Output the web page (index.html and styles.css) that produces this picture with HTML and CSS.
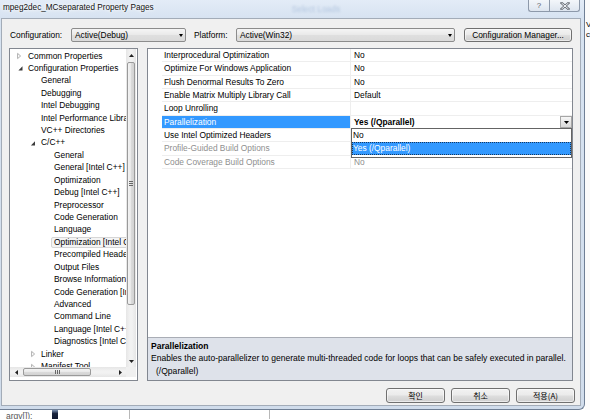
FILE: index.html
```html
<!DOCTYPE html>
<html>
<head>
<meta charset="utf-8">
<title>Property Pages</title>
<link rel="stylesheet" href="styles.css">
</head>
<body>
<div class="desktop">
  <div class="toprow">
    <div class="window">
      <div class="titlebar">
        <span class="title">mpeg2dec_MCseparated Property Pages</span>
        <span class="ghost">Select Loads</span>
        <div class="caption-btns">
          <span class="cap help">?</span>
          <span class="cap close"><svg width="10" height="8" viewBox="0 0 10 8"><path d="M1.5 1 L8.5 7 M8.5 1 L1.5 7" stroke="#6a6f78" stroke-width="2.4" stroke-linecap="square"/><path d="M1.5 1 L8.5 7 M8.5 1 L1.5 7" stroke="#f4f6f9" stroke-width="1"/></svg></span>
        </div>
      </div>
      <div class="client">
        <div class="configrow">
          <span class="lbl">Configuration:</span>
          <div class="combo c1"><span>Active(Debug)</span><i class="arr"></i></div>
          <span class="lbl plat">Platform:</span>
          <div class="combo c2"><span>Active(Win32)</span><i class="arr"></i></div>
          <div class="btn cfgmgr">Configuration Manager...</div>
        </div>
        <div class="main">
          <div class="tree">
            <div class="items">
              <div class="ti l0"><span class="tw"><svg width="13" height="12" viewBox="0 0 13 12"><path d="M2.6 3.4 L2.6 8.6 L5.6 6 Z" fill="none" stroke="#9a9a9a" stroke-width="0.8"/></svg></span><span class="tx">Common Properties</span></div>
              <div class="ti l0"><span class="tw"><svg width="13" height="12" viewBox="0 0 13 12"><path d="M7.5 4.2 L7.5 8.5 L3.4 8.5 Z" fill="#3a3a3a"/></svg></span><span class="tx">Configuration Properties</span></div>
              <div class="ti l1"><span class="tw"></span><span class="tx">General</span></div>
              <div class="ti l1"><span class="tw"></span><span class="tx">Debugging</span></div>
              <div class="ti l1"><span class="tw"></span><span class="tx">Intel Debugging</span></div>
              <div class="ti l1"><span class="tw"></span><span class="tx">Intel Performance Libraries</span></div>
              <div class="ti l1"><span class="tw"></span><span class="tx">VC++ Directories</span></div>
              <div class="ti l1"><span class="tw"><svg width="13" height="12" viewBox="0 0 13 12"><path d="M7 4.2 L7 8.5 L2.9 8.5 Z" fill="#3a3a3a"/></svg></span><span class="tx">C/C++</span></div>
              <div class="ti l2"><span class="tw"></span><span class="tx">General</span></div>
              <div class="ti l2"><span class="tw"></span><span class="tx">General [Intel C++]</span></div>
              <div class="ti l2"><span class="tw"></span><span class="tx">Optimization</span></div>
              <div class="ti l2"><span class="tw"></span><span class="tx">Debug [Intel C++]</span></div>
              <div class="ti l2"><span class="tw"></span><span class="tx">Preprocessor</span></div>
              <div class="ti l2"><span class="tw"></span><span class="tx">Code Generation</span></div>
              <div class="ti l2"><span class="tw"></span><span class="tx">Language</span></div>
              <div class="ti l2"><span class="tw"></span><span class="tx sel">Optimization [Intel C++]</span></div>
              <div class="ti l2"><span class="tw"></span><span class="tx">Precompiled Headers</span></div>
              <div class="ti l2"><span class="tw"></span><span class="tx">Output Files</span></div>
              <div class="ti l2"><span class="tw"></span><span class="tx">Browse Information</span></div>
              <div class="ti l2"><span class="tw"></span><span class="tx">Code Generation [Intel C++]</span></div>
              <div class="ti l2"><span class="tw"></span><span class="tx">Advanced</span></div>
              <div class="ti l2"><span class="tw"></span><span class="tx">Command Line</span></div>
              <div class="ti l2"><span class="tw"></span><span class="tx">Language [Intel C++]</span></div>
              <div class="ti l2"><span class="tw"></span><span class="tx">Diagnostics [Intel C++]</span></div>
              <div class="ti l1"><span class="tw"><svg width="13" height="12" viewBox="0 0 13 12"><path d="M3.6 3.4 L3.6 8.6 L6.6 6 Z" fill="none" stroke="#9a9a9a" stroke-width="0.8"/></svg></span><span class="tx">Linker</span></div>
              <div class="ti l1"><span class="tw"><svg width="13" height="12" viewBox="0 0 13 12"><path d="M3.6 3.4 L3.6 8.6 L6.6 6 Z" fill="none" stroke="#9a9a9a" stroke-width="0.8"/></svg></span><span class="tx">Manifest Tool</span></div>
            </div>
            <div class="vs">
              <div class="sarrow"><svg width="5" height="3" viewBox="0 0 5 3"><path d="M0 3 L2.5 0 L5 3 Z" fill="#222"/></svg></div>
              <div class="vthumb"><span class="vgrip"></span></div>
              <div class="sfill"></div>
              <div class="sarrow"><svg width="5" height="3" viewBox="0 0 5 3"><path d="M0 0 L2.5 3 L5 0 Z" fill="#222"/></svg></div>
            </div>
            <div class="hs">
              <div class="harrow"><svg width="3" height="5" viewBox="0 0 3 5"><path d="M3 0 L0 2.5 L3 5 Z" fill="#222"/></svg></div>
              <div class="hthumb"><span class="hgrip"></span></div>
              <div class="sfill"></div>
              <div class="harrow"><svg width="3" height="5" viewBox="0 0 3 5"><path d="M0 0 L3 2.5 L0 5 Z" fill="#222"/></svg></div>
            </div>
            <div class="corner"></div>
          </div>
          <div class="props">
            <div class="grid">
              <div class="pr"><span class="pm"></span><span class="pn">Interprocedural Optimization</span><span class="pv">No</span></div>
              <div class="pr"><span class="pm"></span><span class="pn">Optimize For Windows Application</span><span class="pv">No</span></div>
              <div class="pr"><span class="pm"></span><span class="pn">Flush Denormal Results To Zero</span><span class="pv">No</span></div>
              <div class="pr"><span class="pm"></span><span class="pn">Enable Matrix Multiply Library Call</span><span class="pv">Default</span></div>
              <div class="pr"><span class="pm"></span><span class="pn">Loop Unrolling</span><span class="pv"></span></div>
              <div class="pr sel"><span class="pm"></span><span class="pn">Parallelization</span><span class="pv"><span class="edit">Yes (/Qparallel)</span><span class="ddbtn"><svg width="5" height="3" viewBox="0 0 5 3"><path d="M0 0 L2.5 3 L5 0 Z" fill="#000"/></svg></span>
                <div class="ddlist"><div class="ddi">No</div><div class="ddi on">Yes (/Qparallel)</div></div>
              </span></div>
              <div class="pr"><span class="pm"></span><span class="pn">Use Intel Optimized Headers</span><span class="pv">No</span></div>
              <div class="pr dis"><span class="pm"></span><span class="pn">Profile-Guided Build Options</span><span class="pv"></span></div>
              <div class="pr dis"><span class="pm"></span><span class="pn">Code Coverage Build Options</span><span class="pv">No</span></div>
            </div>
            <div class="desc">
              <div class="dt">Parallelization</div>
              <div class="dd">Enables the auto-parallelizer to generate multi-threaded code for loops that can be safely executed in parallel.</div>
              <div class="dd ind">(/Qparallel)</div>
            </div>
          </div>
        </div>
        <div class="buttons">
          <div class="btn kb">확인</div>
          <div class="btn kb">취소</div>
          <div class="btn kb">적용(A)</div>
        </div>
      </div>
    </div>
    <div class="sliver"><span>V</span><span>c</span></div>
  </div>
  <div class="behind">
    <span class="bcode">argv[]);</span>
    <span class="bmark"></span>
    <span class="bgap1"></span>
    <span class="bgap2"></span>
  </div>
</div>
</body>
</html>
```

FILE: styles.css
```css
* { box-sizing: border-box; }
html, body { margin: 0; padding: 0; }
body {
  width: 590px;
  height: 419px;
  overflow: hidden;
  background: #ffffff;
  font-family: "Liberation Sans", Arial, sans-serif;
  font-size: 8.4px;
  color: #000;
}
.desktop { display: flex; flex-direction: column; width: 590px; height: 419px; }
.toprow { display: flex; height: 410px; }

.window {
  width: 585px;
  height: 410px;
  flex: none;
  display: flex;
  flex-direction: column;
  background: linear-gradient(180deg, #e3ecf7 0, #d7e3f1 18px, #d0dceb 100%);
  border-right: 1px solid #6f7f95;
  border-bottom: 1px solid #6f7f95;
  border-radius: 0 0 6px 0;
}

.titlebar { height: 18px; display: flex; align-items: flex-start; flex: none; }
.title {
  padding-left: 3px;
  margin-top: 2px;
  line-height: 12px;
  font-size: 8.2px;
  color: #111;
  text-shadow: 0 0 5px #fff, 0 0 3px #fff;
  white-space: nowrap;
}
.ghost {
  margin-left: 138px;
  margin-top: 3px;
  line-height: 12px;
  color: rgba(130, 160, 200, 0.45);
  filter: blur(0.8px);
  white-space: nowrap;
}
.caption-btns { margin-left: auto; margin-right: 4px; display: flex; height: 12px; }
.cap {
  height: 12px;
  display: flex;
  align-items: center;
  justify-content: center;
  border: 1px solid #8d99aa;
  border-top: none;
  background: linear-gradient(180deg, #f3f6fa, #dde5ef);
  color: #5a606a;
  font-size: 8px;
  line-height: 10px;
}
.help { width: 21px; border-radius: 0 0 0 3px; border-right: none; }
.close { width: 31px; border-radius: 0 0 3px 0; }

.client {
  margin-left: 1px;
  width: 580px;
  height: 388px;
  flex: none;
  border: 1px solid #a3acb8;
  background: #f0f0f0;
  padding: 9px 7px 0 7px;
  display: flex;
  flex-direction: column;
}

.configrow { display: flex; align-items: center; height: 14px; flex: none; }
.lbl { width: 62px; padding-left: 1px; line-height: 14px; white-space: nowrap; flex: none; }
.plat { margin-left: 8px; width: 42px; padding-left: 0; }
.combo {
  height: 14px;
  flex: none;
  border: 1px solid #8c8c8c;
  border-radius: 2px;
  background: linear-gradient(180deg, #f5f5f5, #e9e9e9 50%, #dfdfdf 51%, #dadada);
  display: flex;
  align-items: center;
  padding-left: 3px;
  white-space: nowrap;
}
.c1 { width: 115px; }
.c2 { width: 219px; }
.arr {
  margin-left: auto;
  margin-right: 2px;
  width: 0;
  height: 0;
  border-left: 2.5px solid transparent;
  border-right: 2.5px solid transparent;
  border-top: 3px solid #000;
}
.btn {
  height: 14px;
  flex: none;
  border: 1px solid #707070;
  border-radius: 3px;
  background: linear-gradient(180deg, #f2f2f2, #ebebeb 45%, #dddddd 55%, #cfcfcf);
  box-shadow: inset 0 0 0 1px rgba(255, 255, 255, 0.55);
  display: flex;
  align-items: center;
  justify-content: center;
  white-space: nowrap;
}
.cfgmgr { margin-left: 9px; width: 108px; }

.main { display: flex; gap: 9px; margin-top: 6px; height: 333px; flex: none; }

.tree {
  width: 129px;
  flex: none;
  border: 1px solid #828790;
  background: #fff;
  padding: 0 1px 3px 0;
  display: grid;
  grid-template-columns: 1fr 10px;
  grid-template-rows: 1fr 10px;
}
.items { overflow: hidden; padding-top: 0.8px; white-space: nowrap; }
.ti { height: 12.43px; display: flex; align-items: center; }
.l0 { padding-left: 5px; }
.l1 { padding-left: 18px; }
.l2 { padding-left: 31px; }
.tw { width: 13px; height: 12px; flex: none; display: block; }
.tw svg { display: block; }
.tx {
  margin-left: -3px;
  padding: 0 2px;
  border: 1px solid transparent;
  line-height: 9px;
  border-radius: 2px;
}
.tx.sel { background: #f4f4f4; border-color: #d6d6d6; }

.vs {
  display: flex;
  flex-direction: column;
  background: linear-gradient(90deg, #e6e6e6, #f2f2f2 40%, #f2f2f2 60%, #e6e6e6);
}
.sarrow { height: 12px; flex: none; display: flex; align-items: center; justify-content: center; }
.sarrow svg, .harrow svg { display: block; }
.vthumb {
  height: 243px;
  flex: none;
  margin: 1px 1px 0 1px;
  border: 1px solid #9a9a9a;
  border-radius: 2px;
  background: linear-gradient(90deg, #f4f4f4, #e9e9e9 45%, #dadada 55%, #d2d2d2);
  display: flex;
  align-items: center;
  justify-content: center;
}
.vgrip {
  width: 4px;
  height: 5px;
  background: repeating-linear-gradient(180deg, #666 0, #666 1px, transparent 1px, transparent 2px);
}
.sfill { flex: 1; }
.hs {
  display: flex;
  background: linear-gradient(180deg, #e6e6e6, #f2f2f2 40%, #f2f2f2 60%, #e6e6e6);
}
.harrow { width: 12px; flex: none; display: flex; align-items: center; justify-content: center; }
.hthumb {
  width: 68px;
  flex: none;
  margin: 1px 0 1px 1px;
  border: 1px solid #9a9a9a;
  border-radius: 2px;
  background: linear-gradient(180deg, #f4f4f4, #e9e9e9 45%, #dadada 55%, #d2d2d2);
  display: flex;
  align-items: center;
  justify-content: center;
}
.hgrip {
  width: 5px;
  height: 4px;
  background: repeating-linear-gradient(90deg, #666 0, #666 1px, transparent 1px, transparent 2px);
}
.corner { background: #f0f0f0; }

.props {
  width: 426px;
  flex: none;
  border: 1px solid #828790;
  background: #fff;
  display: flex;
  flex-direction: column;
}
.grid { flex: 1; }
.pr { display: grid; grid-template-columns: 14px 189px 1fr; height: 13.33px; }
.pn, .pv {
  border-bottom: 1px solid #eeeeee;
  line-height: 12.33px;
  white-space: nowrap;
  overflow: hidden;
}
.pn { border-right: 1px solid #eeeeee; padding-left: 2px; }
.pv { padding-left: 3px; }
.dis .pn, .dis .pv { color: #8f8f8f; }
.sel .pn { background: #3399ff; color: #fff; }
.sel .pv { position: relative; overflow: visible; display: flex; padding-right: 0; }
.edit { font-weight: bold; flex: 1; }
.ddbtn {
  width: 12px;
  height: 12px;
  flex: none;
  margin-top: 0.5px;
  border: 1px solid #a6a6a6;
  background: linear-gradient(180deg, #f7f7f7, #e6e6e6 50%, #d9d9d9);
  display: flex;
  align-items: center;
  justify-content: center;
}
.ddbtn svg { display: block; }
.ddlist {
  position: absolute;
  top: 100%;
  left: 0;
  right: 0;
  border: 1px solid #646464;
  background: #fff;
  padding-bottom: 2px;
  z-index: 2;
}
.ddi { height: 13px; line-height: 13px; padding-left: 1px; color: #000; }
.ddi.on { background: #3399ff; color: #fff; outline: 1px dotted #17385f; outline-offset: -1px; }

.desc {
  height: 43px;
  flex: none;
  border-top: 1px solid #a9adb5;
  background: #dee2ea;
  padding: 2px 3px 0 3px;
  line-height: 12.3px;
  font-size: 8.55px;
  white-space: nowrap;
}
.dt { font-weight: bold; }
.ind { padding-left: 5px; }

.buttons { display: flex; justify-content: flex-end; gap: 6px; margin-top: 7px; margin-right: -2px; height: 15px; flex: none; }
.kb {
  width: 59px;
  height: 15px;
  font-family: "Noto Sans CJK KR", "Liberation Sans", sans-serif;
  font-size: 8px;
}

.sliver {
  width: 5px;
  flex: none;
  background: #fbfbfb;
  display: flex;
  flex-direction: column;
  padding-top: 20px;
  padding-left: 1px;
  font-size: 8px;
  line-height: 10px;
  overflow: hidden;
}

.behind { height: 9px; display: flex; background: #fff; overflow: hidden; }
.bcode {
  width: 52px;
  flex: none;
  padding-left: 6px;
  padding-top: 2px;
  font-size: 8.5px;
  line-height: 9px;
  color: #555;
  white-space: nowrap;
}
.bmark { width: 6px; flex: none; background: linear-gradient(180deg, #7f94b4, #18233d 40%, #0f1830); }
.bgap1 { width: 72px; flex: none; border-right: 1px solid #b8b8b8; }
.bgap2 { width: 140px; flex: none; border-right: 1px solid #b8b8b8; }
```
